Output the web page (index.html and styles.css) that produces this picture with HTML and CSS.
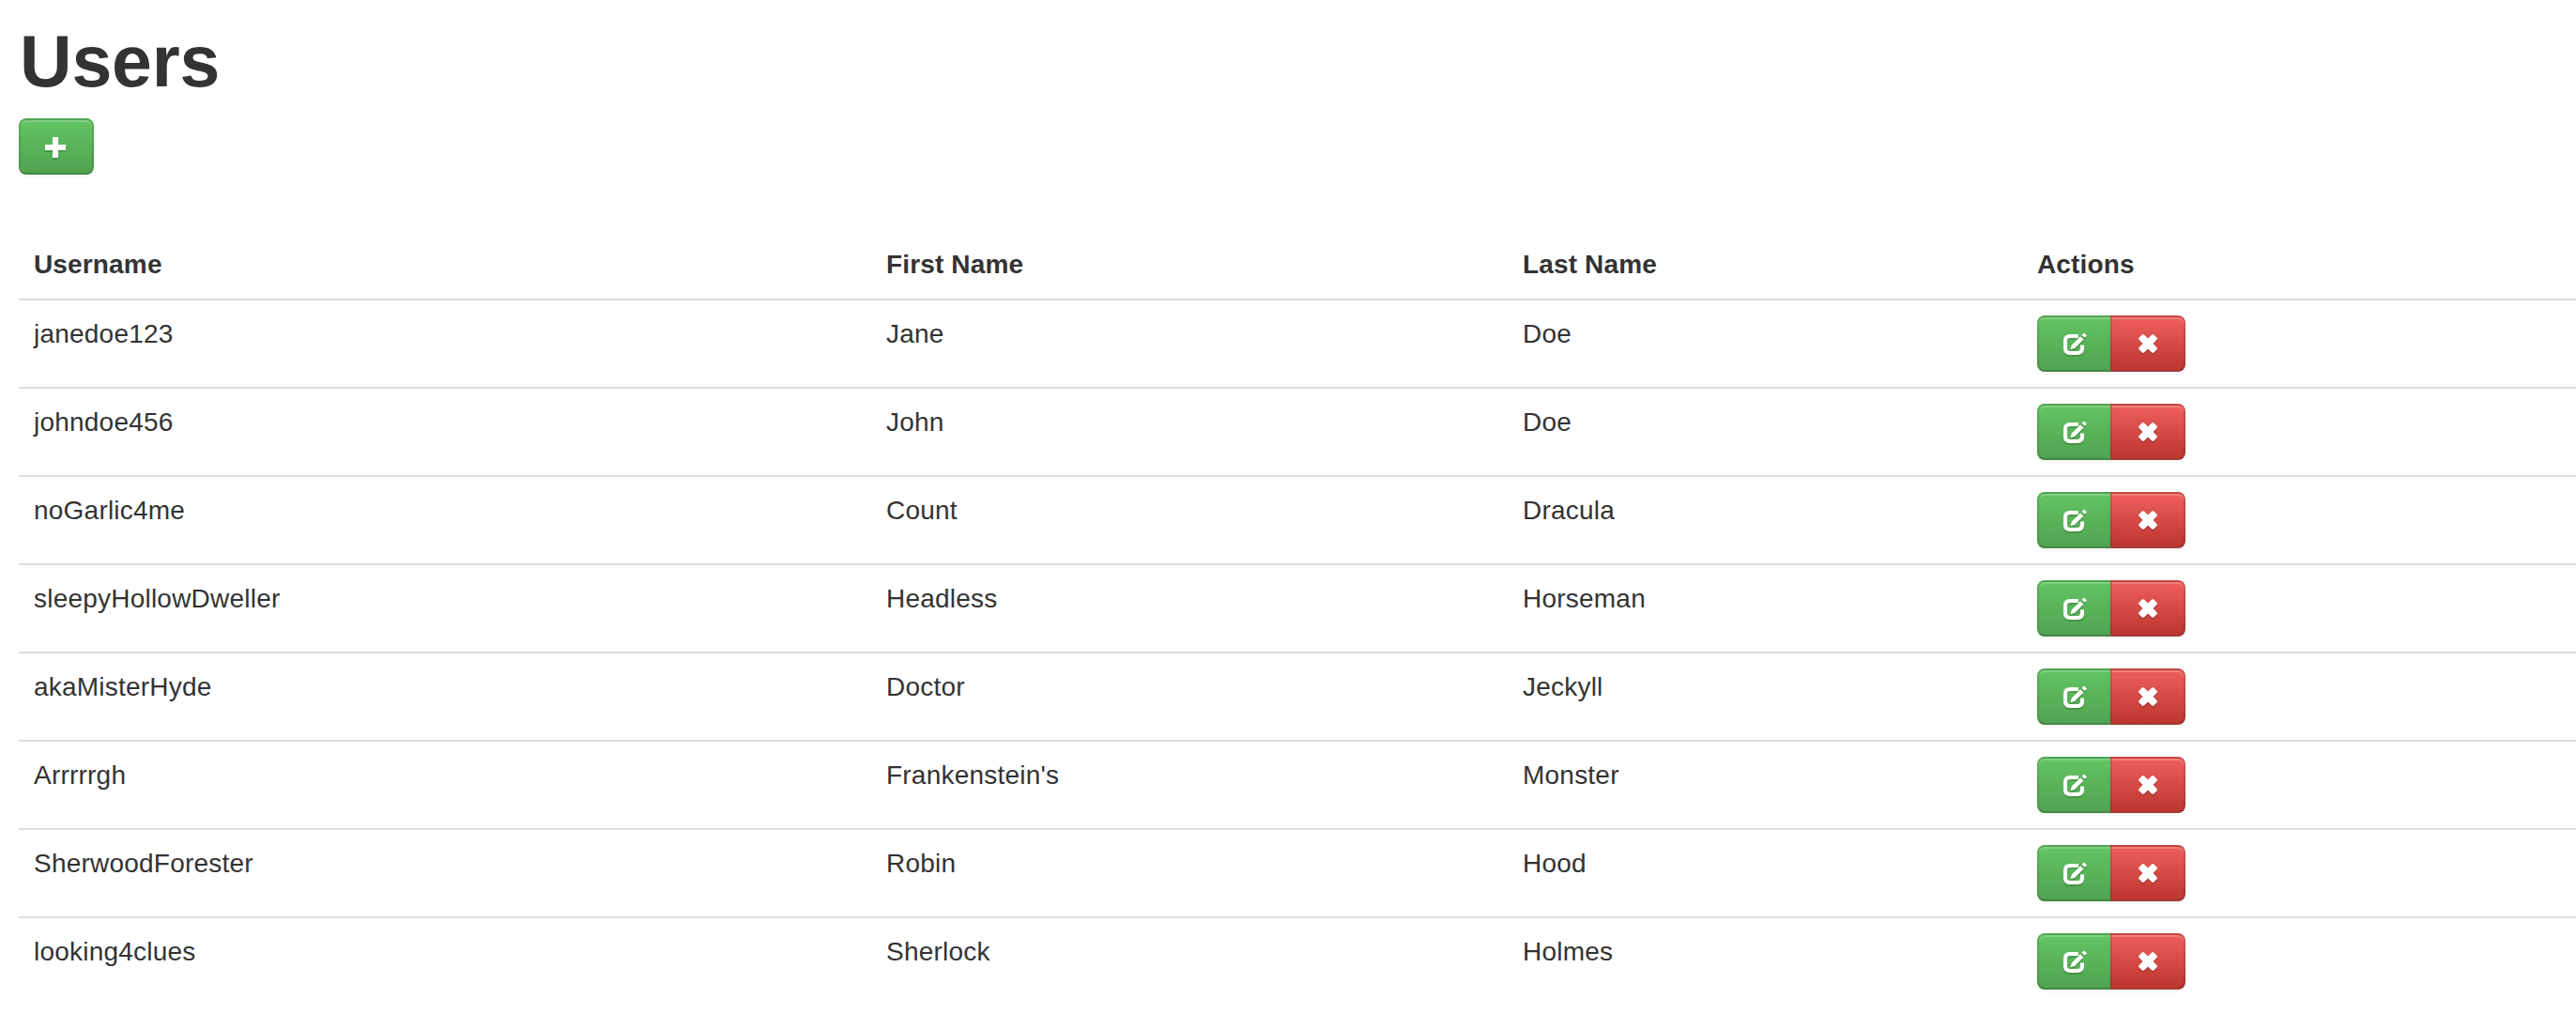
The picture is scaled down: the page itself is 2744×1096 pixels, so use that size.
FILE: index.html
```html
<!DOCTYPE html>
<html lang="en">
<head>
  <meta charset="UTF-8">
  <title>Users</title>
  <link rel="stylesheet" href="styles.css">
</head>
<body>
  <!-- icon set -->
  <svg class="icon-defs" aria-hidden="true">
    <symbol id="icon-plus" viewBox="0 0 14 14">
      <path d="M5 1h3v4h4v3H8v4H5V8H1V5h4z"/>
    </symbol>
    <symbol id="icon-edit" viewBox="0 0 14 14">
      <path d="M8.9 2H4.5Q2 2 2 4.5V8.5Q2 11 4.5 11H8.5Q11 11 11 8.5V6.8" fill="none" stroke="#fff" stroke-width="2"/>
      <path d="M4.7 9.1L5.4 6.7L10 2.2L11.7 3.8L7.1 8.4zM10.8 1.4L12 .2L13.5 1.7L12.3 2.9z"/>
    </symbol>
    <symbol id="icon-remove" viewBox="0 0 14 14">
      <path d="M4 1.1h.8L7 3.2L9.2 1.1H10L11.9 3v.8L9.8 6L11.9 8.2V9L10 10.9H9.2L7 8.8L4.8 10.9H4L2.1 9V8.2L4.2 6L2.1 3.8V3z"/>
    </symbol>
  </svg>

  <h1>Users</h1>
  <button class="btn btn-success" id="add"><svg class="icon"><use href="#icon-plus"/></svg></button>

  <table class="table">
    <colgroup>
      <col class="col-username">
      <col class="col-first">
      <col class="col-last">
      <col class="col-actions">
    </colgroup>
    <thead>
      <tr>
        <th>Username</th>
        <th>First Name</th>
        <th>Last Name</th>
        <th>Actions</th>
      </tr>
    </thead>
    <tbody id="users"></tbody>
  </table>

  <script>
    const users = [
      ['janedoe123', 'Jane', 'Doe'],
      ['johndoe456', 'John', 'Doe'],
      ['noGarlic4me', 'Count', 'Dracula'],
      ['sleepyHollowDweller', 'Headless', 'Horseman'],
      ['akaMisterHyde', 'Doctor', 'Jeckyll'],
      ['Arrrrrgh', "Frankenstein's", 'Monster'],
      ['SherwoodForester', 'Robin', 'Hood'],
      ['looking4clues', 'Sherlock', 'Holmes']
    ];

    document.getElementById('users').innerHTML = users.map(user => `
      <tr>
        <td>${user[0]}</td>
        <td>${user[1]}</td>
        <td>${user[2]}</td>
        <td>
          <div class="btn-group">
            <button class="btn btn-success"><svg class="icon"><use href="#icon-edit"/></svg></button>
            <button class="btn btn-danger"><svg class="icon"><use href="#icon-remove"/></svg></button>
          </div>
        </td>
      </tr>`).join('');
  </script>
</body>
</html>
```
FILE: styles.css
```css
body {
  margin: 0;
  padding: 25px 0 0 20px;
  background-color: #fff;
  color: #333;
  font-family: "Liberation Sans", Arial, sans-serif;
  font-size: 28px;
  line-height: 40px;
  overflow: hidden;
}
h1 {
  margin: 0 0 21px 1px;
  font-size: 77px;
  line-height: 80px;
  letter-spacing: -0.2px;
}
.icon-defs {
  position: absolute;
  width: 0;
  height: 0;
}
/* buttons */
.btn {
  display: flex;
  box-sizing: border-box;
  width: 80px;
  height: 60px;
  margin: 0;
  padding: 16px 24px;
  border: 2px solid;
  border-color: rgba(0, 0, 0, 0.1) rgba(0, 0, 0, 0.1) rgba(0, 0, 0, 0.25);
  border-radius: 8px;
  background-repeat: repeat-x;
  box-shadow: inset 0 2px 0 rgba(255, 255, 255, 0.2), 0 2px 4px rgba(0, 0, 0, 0.05);
  cursor: pointer;
}
.btn-success {
  background-color: #5bb75b;
  background-image: linear-gradient(to bottom, #62c462, #51a351);
}
.btn-danger {
  background-color: #da4f49;
  background-image: linear-gradient(to bottom, #ee5f5b, #bd362f);
}
.icon {
  flex: none;
  width: 28px;
  height: 28px;
  fill: #fff;
  filter: drop-shadow(0 2px 0 rgba(0, 0, 0, 0.15));
}
.btn-group {
  display: flex;
}
.btn-group .btn:first-child {
  border-radius: 8px 0 0 8px;
}
.btn-group .btn:last-child {
  margin-left: -2px;
  border-radius: 0 8px 8px 0;
}
/* users table */
.table {
  width: 2724px;
  margin-top: 60px;
  table-layout: fixed;
  border-collapse: separate;
  border-spacing: 0;
}
.table th,
.table td {
  padding: 16px;
  text-align: left;
  vertical-align: top;
}
.table th {
  letter-spacing: 0.15px;
}
.table td {
  border-top: 2px solid #ddd;
  letter-spacing: 0.22px;
}
.col-username {
  width: 908px;
}
.col-first {
  width: 678px;
}
.col-last {
  width: 548px;
}
```
